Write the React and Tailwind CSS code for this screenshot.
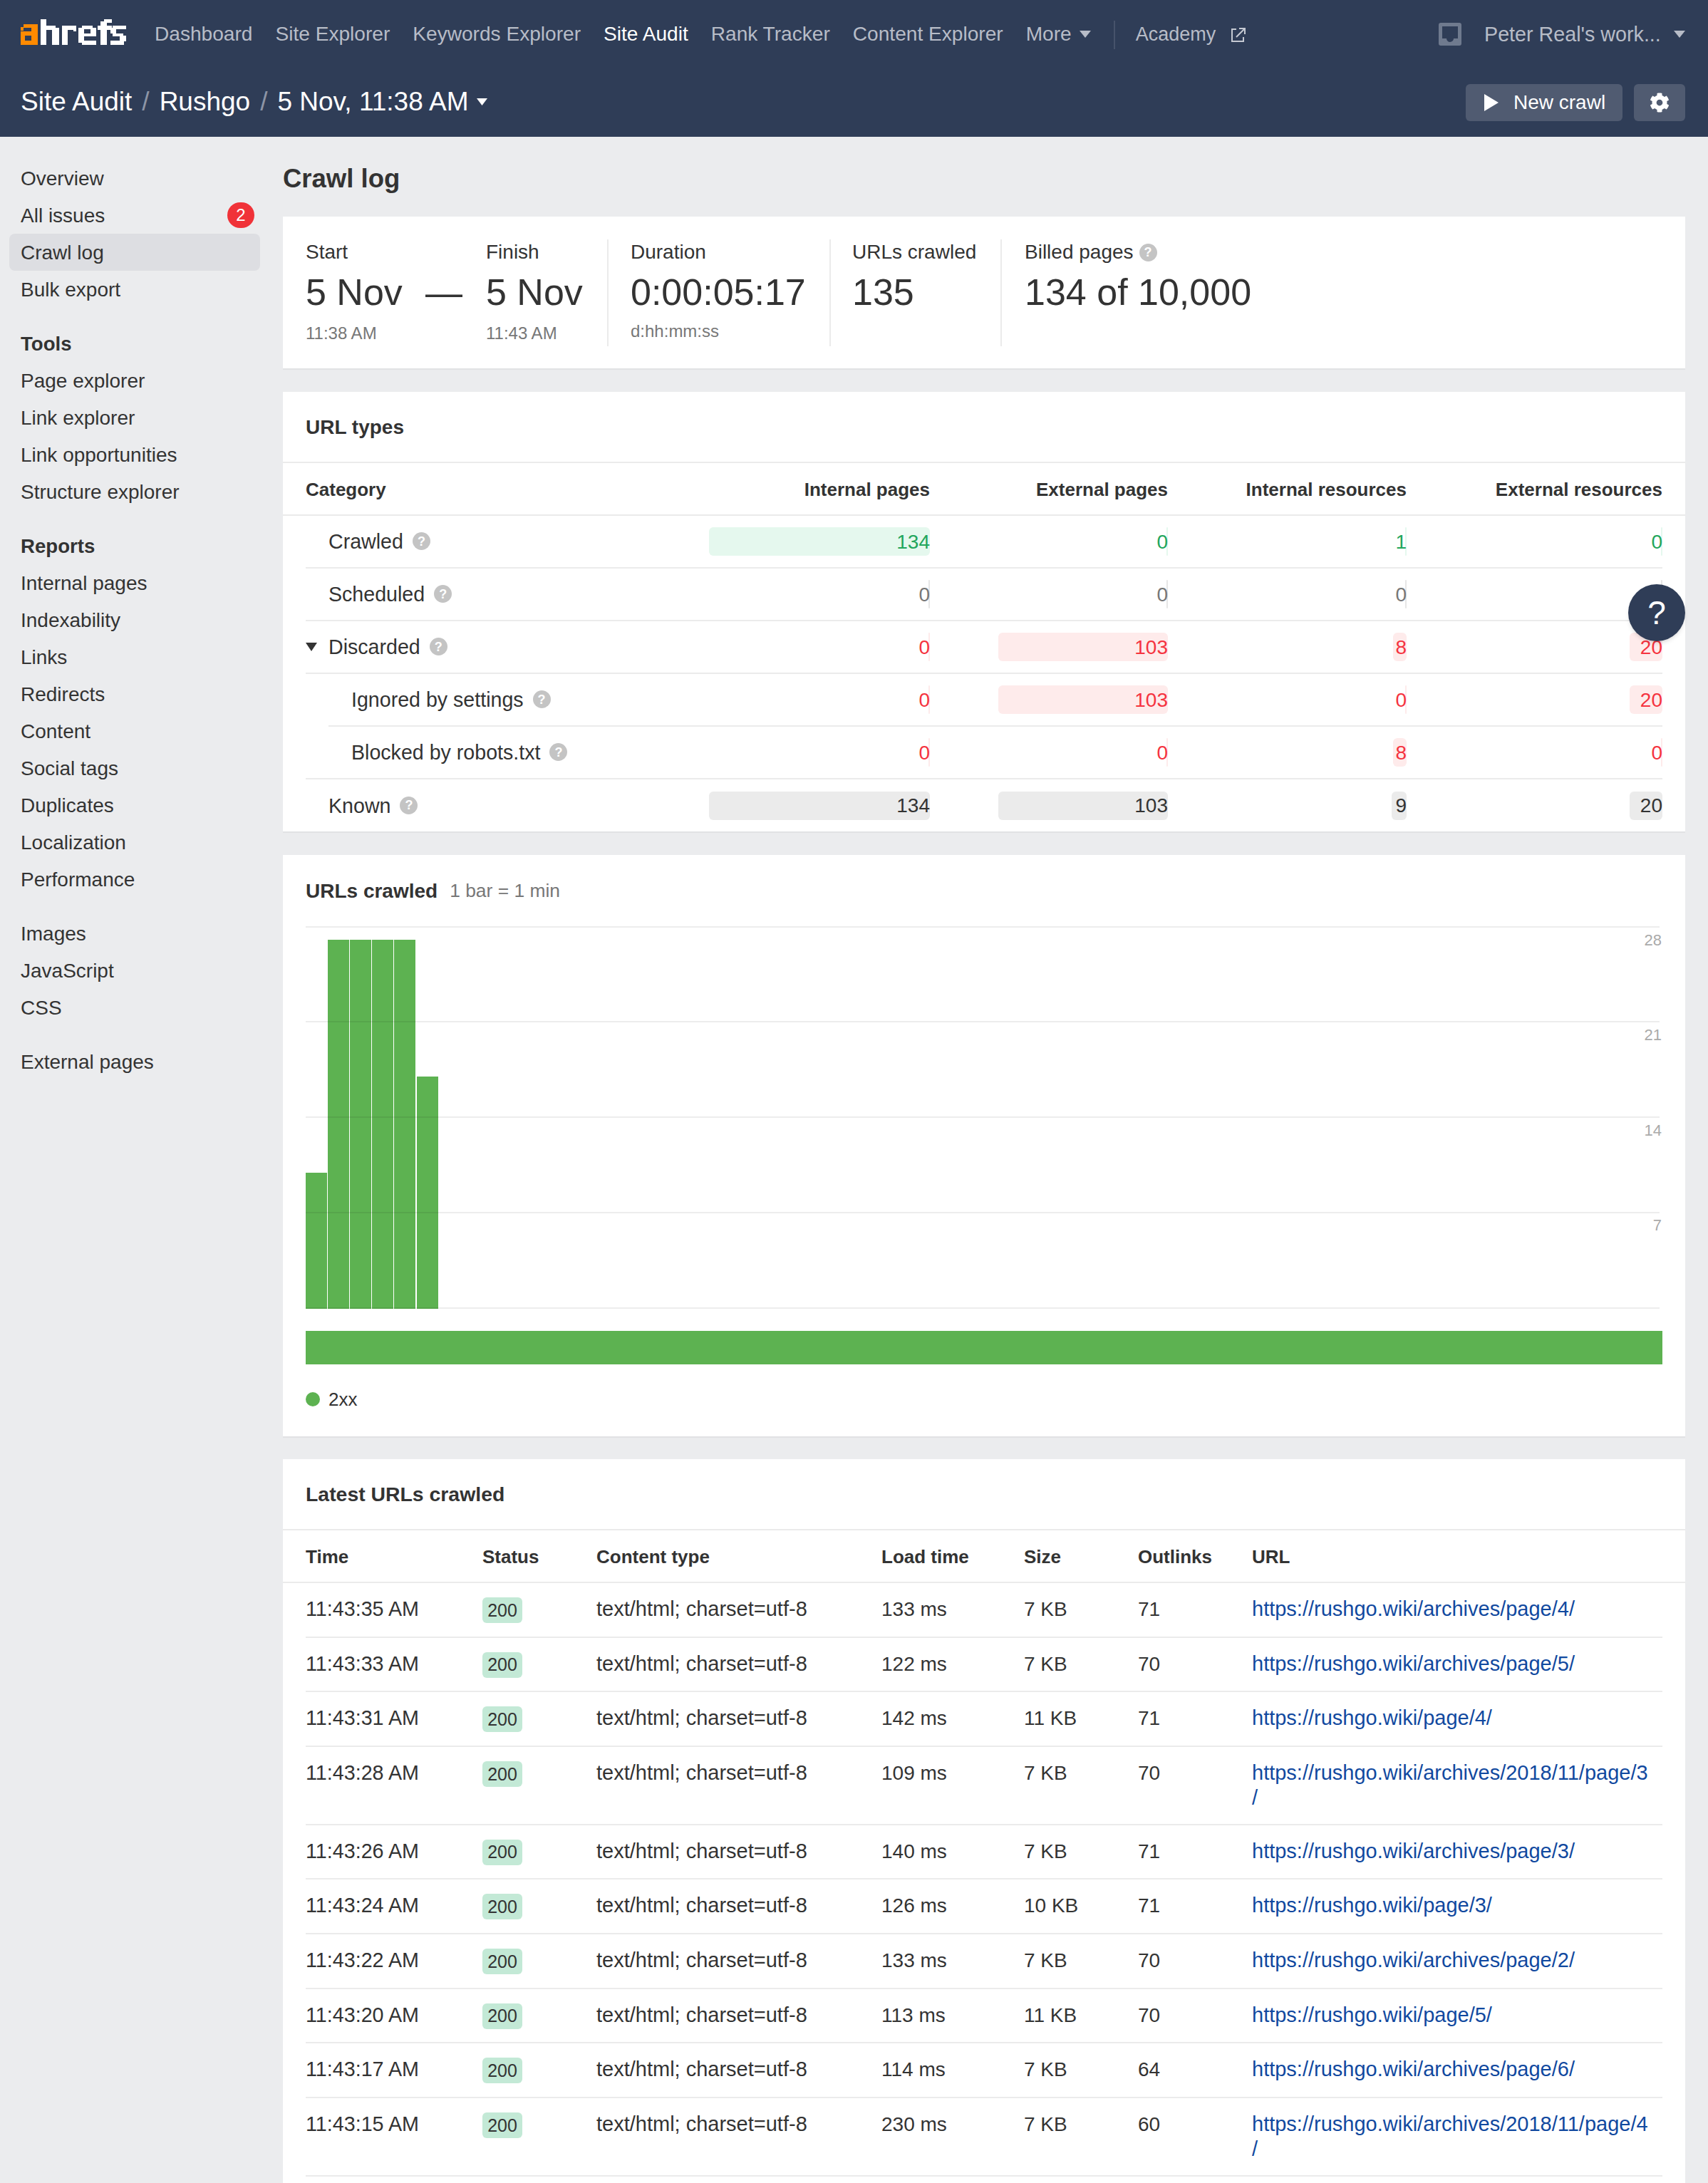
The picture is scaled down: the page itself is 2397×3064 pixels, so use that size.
import React from 'react';
import { FaCog } from 'react-icons/fa';

const Logo = () => {
  const orange = [[4,7,20,5],[0,11,4,5],[15,7,9,29],[0,17,24,6],[0,17,6,19],[0,30,24,6]];
  const white = [
    [28,0,8,36],[36,9,13,6],[44,12,10,24],
    [58,9,8,27],[66,9,12,6],[74,9,4,8],
    [86,9,15,5],[81,12,8,21],[98,12,8,12],[81,20,25,4],[86,30,20,6],
    [112,3,9,33],[117,0,11,5],[108,9,20,6],
    [129,9,19,5],[126,12,8,8],[129,20,15,4],[139,23,9,8],[126,30,19,6],
  ];
  return (
    <svg width="148" height="36" viewBox="0 0 148 36" className="shrink-0 -mt-[8px]" aria-label="ahrefs">
      {orange.map((r, i) => <rect key={i} x={r[0]} y={r[1]} width={r[2]} height={r[3]} fill="#ff8a00" />)}
      {white.map((r, i) => <rect key={i} x={r[0]} y={r[1]} width={r[2]} height={r[3]} fill="#ffffff" />)}
    </svg>
  );
};

const Caret = ({ w = 16, h = 10, color = '#b7bcc7' }) => (
  <svg width={w} height={h} viewBox="0 0 16 10" preserveAspectRatio="none" className="shrink-0"><path d="M0 0H16L8 10Z" fill={color} /></svg>
);

const Help = ({ className = '' }) => (
  <span className={`inline-flex items-center justify-center shrink-0 w-[25px] h-[25px] rounded-full bg-[#c4c4c4] text-white text-[18px] font-bold leading-none ${className}`}>?</span>
);

const navItems = ['Dashboard', 'Site Explorer', 'Keywords Explorer', 'Site Audit', 'Rank Tracker', 'Content Explorer'];

const Header = () => (
  <header className="h-[192px] bg-[#2f3d57] shrink-0 px-[29px] pr-[32px]">
    <div className="h-[96px] flex items-center text-[28.1px] text-[#b7bcc7] pt-[1px]">
      <Logo />
      <nav className="ml-[40px] flex items-center gap-[32px]">
        {navItems.map((n) => (
          <span key={n} className={n === 'Site Audit' ? 'text-white' : ''}>{n}</span>
        ))}
        <span className="flex items-center gap-[11px]">More <Caret /></span>
      </nav>
      <div className="ml-[32px] w-[2px] h-[40px] bg-[#46536b]" />
      <span className="ml-[29px] flex items-center gap-[21px] text-[27px]">
        Academy
        <svg width="22" height="22" viewBox="0 0 22 22" fill="none" stroke="#c5c9d2" strokeWidth="2">
          <path d="M8 3H2V20H18V14" />
          <path d="M8 14L20 2M12 2H20V10" />
        </svg>
      </span>
      <div className="ml-auto flex items-center">
        <svg width="32" height="32" viewBox="0 0 32 32">
          <path fillRule="evenodd" d="M3 0H29a3 3 0 0 1 3 3V29a3 3 0 0 1-3 3H3a3 3 0 0 1-3-3V3a3 3 0 0 1 3-3ZM5 5V22H11a5 5 0 0 0 10 0H27V5Z" fill="#6f7a8e" />
        </svg>
        <span className="ml-[32px] w-[266px] whitespace-nowrap text-[28.7px]">Peter Real's work...</span>
        <Caret />
      </div>
    </div>
    <div className="h-[96px] flex items-center">
      <div className="flex items-center text-[37px] text-white -mt-[2px]">
        <span>Site Audit</span>
        <span className="text-[#8d95a6] mx-[14px]">/</span>
        <span>Rushgo</span>
        <span className="text-[#8d95a6] mx-[14px]">/</span>
        <span>5 Nov, 11:38 AM</span>
        <span className="ml-[11px]"><Caret w={15} h={10} color="#ffffff" /></span>
      </div>
      <div className="ml-auto flex items-center gap-[16px]">
        <button className="h-[52px] w-[220px] rounded-md bg-[#505b71] flex items-center pl-[26px] text-white text-[28px]">
          <svg width="20" height="24" viewBox="0 0 20 24"><path d="M0 0L20 12L0 24Z" fill="#ffffff" /></svg>
          <span className="ml-[21px]">New crawl</span>
        </button>
        <button className="h-[52px] w-[72px] rounded-md bg-[#505b71] flex items-center justify-center text-white">
          <FaCog size={28} />
        </button>
      </div>
    </div>
  </header>
);

const SideItem = ({ label, active, badge }) => (
  <div className={`h-[52px] flex items-center justify-between pl-[16px] pr-[8px] rounded-lg ${active ? 'bg-[#dddee2]' : ''}`}>
    <span className="pt-[1px]">{label}</span>
    {badge && <span className="w-[38px] h-[36px] rounded-full bg-[#f03238] text-white text-[24px] flex items-center justify-center">{badge}</span>}
  </div>
);

const SideHead = ({ label }) => (
  <div className="h-[52px] mt-[24px] flex items-center pl-[16px] pt-[1px] font-bold text-[27.6px]">{label}</div>
);

const Sidebar = () => (
  <aside className="w-[397px] shrink-0 pl-[13px] pr-[32px] pt-[32px]">
    <SideItem label="Overview" />
    <SideItem label="All issues" badge="2" />
    <SideItem label="Crawl log" active />
    <SideItem label="Bulk export" />
    <SideHead label="Tools" />
    {['Page explorer', 'Link explorer', 'Link opportunities', 'Structure explorer'].map((s) => <SideItem key={s} label={s} />)}
    <SideHead label="Reports" />
    {['Internal pages', 'Indexability', 'Links', 'Redirects', 'Content', 'Social tags', 'Duplicates', 'Localization', 'Performance'].map((s) => <SideItem key={s} label={s} />)}
    <div className="mt-[24px]">
      {['Images', 'JavaScript', 'CSS'].map((s) => <SideItem key={s} label={s} />)}
    </div>
    <div className="mt-[24px]"><SideItem label="External pages" /></div>
  </aside>
);

const Stat = ({ label, big, small, help, className, smallClass = 'mt-[12px]' }) => (
  <div className={className}>
    <div className="h-[36px] flex items-center gap-[8px]">{label}{help && <Help />}</div>
    <div className="mt-[8px] h-[60px] flex items-center text-[52px] whitespace-nowrap">{big}</div>
    {small && <div className={`${smallClass} leading-[32px] text-[24px] text-[#777777]`}>{small}</div>}
  </div>
);

const StatsCard = () => (
  <section className="bg-white border-b-2 border-[#e1e2e4] h-[215px] pt-[32px] pl-[32px] flex items-start">
    <Stat label="Start" big="5 Nov" small="11:38 AM" className="w-[168px]" />
    <div className="w-[85px] mt-[44px] h-[60px] flex items-center text-[52px]">—</div>
    <Stat label="Finish" big="5 Nov" small="11:43 AM" className="w-[170px]" />
    <Stat label="Duration" big="0:00:05:17" small="d:hh:mm:ss" smallClass="mt-[9px]" className="w-[312px] h-[150px] border-l-2 border-[#ebebeb] pl-[31px]" />
    <Stat label="URLs crawled" big="135" className="w-[240px] h-[150px] border-l-2 border-[#ebebeb] pl-[30px]" />
    <Stat label="Billed pages" big="134 of 10,000" help className="h-[150px] border-l-2 border-[#ebebeb] pl-[32px]" />
  </section>
);

const tones = {
  green: 'text-[#22a65c] bg-[#e5f8ee]',
  gray: 'text-[#777777] bg-[#e6e6e6]',
  red: 'text-[#f5333f] bg-[#feebeb]',
  dark: 'text-[#333333] bg-[#ebebeb]',
};

const Bar = ({ v, w, tone }) => {
  return (
    <div className="flex justify-end items-center">
      <div style={{ width: w }} className={`h-[40px] pt-[1px] rounded-md flex justify-end items-center whitespace-nowrap ${tones[tone]}`}>{v}</div>
    </div>
  );
};

const typeRows = [
  { label: 'Crawled', tone: 'green', cells: [[134, 310], [0, 2], [1, 2], [0, 2]] },
  { label: 'Scheduled', tone: 'gray', cells: [[0, 2], [0, 2], [0, 2], [0, 2]] },
  { label: 'Discarded', tone: 'red', caret: true, cells: [[0, 2], [103, 238], [8, 19], [20, 46]] },
  { label: 'Ignored by settings', tone: 'red', nested: true, cells: [[0, 2], [103, 238], [0, 2], [20, 46]] },
  { label: 'Blocked by robots.txt', tone: 'red', nested2: true, cells: [[0, 2], [0, 2], [8, 19], [0, 2]] },
  { label: 'Known', tone: 'dark', last: true, cells: [[134, 310], [103, 238], [9, 21], [20, 46]] },
];

const TypeRow = ({ r }) => {
  const grid = r.nested
    ? 'ml-[32px] grid-cols-[534px_310px_334px_335px_359px]'
    : 'grid-cols-[566px_310px_334px_335px_359px]';
  const border = r.last ? 'h-[73px]' : 'h-[74px] border-b-2 border-[#ebebeb]';
  return (
    <div className={`grid items-center ${grid} ${border}`}>
      <div className={`flex items-center gap-[13px] text-[28.6px] ${r.nested ? 'pl-[32px]' : r.nested2 ? 'pl-[64px]' : r.caret ? '' : 'pl-[32px]'}`}>
        {r.caret && <span className="mr-[3px]"><Caret h={12} color="#333333" /></span>}
        <span className="pt-[1px]">{r.label}</span>
        <Help />
      </div>
      {r.cells.map((c, i) => <Bar key={i} v={c[0]} w={c[1]} tone={r.tone} />)}
    </div>
  );
};

const TypesCard = () => (
  <section className="bg-white mt-[31px] border-b-2 border-[#e1e2e4]">
    <div className="h-[100px] flex items-center px-[32px] pt-[2px] font-bold border-b-2 border-[#ebebeb]">URL types</div>
    <div className="h-[74px] px-[32px] pt-[2px] border-b-2 border-[#ebebeb] font-bold text-[26px] grid grid-cols-[566px_310px_334px_335px_359px] items-center">
      <div>Category</div>
      <div className="text-right whitespace-nowrap">Internal pages</div>
      <div className="text-right">External pages</div>
      <div className="text-right">Internal resources</div>
      <div className="text-right">External resources</div>
    </div>
    <div className="px-[32px]">
      {typeRows.map((r) => <TypeRow key={r.label} r={r} />)}
    </div>
  </section>
);

const Chart = () => {
  const lines = [1, 134, 268, 402, 536];
  const bars = [[0, 346], [31, 19], [62, 19], [93, 19], [124, 19], [156, 211]];
  const labels = [['28', 27], ['21', 160], ['14', 294], ['7', 427]];
  return (
    <svg width="1904" height="538" viewBox="0 0 1904 538" className="block">
      {bars.map((b, i) => <rect key={i} x={b[0]} y={b[1]} width="30" height={537 - b[1]} fill="#5db251" />)}
      {lines.map((y) => <line key={y} x1="0" x2="1900" y1={y} y2={y} stroke="#000000" strokeOpacity="0.07" strokeWidth="2" />)}
      {labels.map(([t, y]) => (
        <text key={t} x="1903" y={y} textAnchor="end" fontSize="22" fill="#aaaaaa" fontFamily="'Liberation Sans', sans-serif">{t}</text>
      ))}
    </svg>
  );
};

const ChartCard = () => (
  <section className="bg-white mt-[31px] border-b-2 border-[#e1e2e4] px-[32px] h-[818px]">
    <div className="h-[100px] pt-[2px] flex items-center gap-[17px]">
      <span className="font-bold">URLs crawled</span>
      <span className="text-[26.4px] text-[#777777]">1 bar = 1 min</span>
    </div>
    <Chart />
    <div className="mt-[30px] h-[47px] bg-[#5db251]" />
    <div className="mt-[32px] h-[34px] flex items-center gap-[12px] text-[26px]">
      <span className="w-[20px] h-[20px] rounded-full bg-[#5db251]" />
      <span>2xx</span>
    </div>
  </section>
);

const logRows = [
  ['11:43:35 AM', '133 ms', '7 KB', '71', 'https://rushgo.wiki/archives/page/4/'],
  ['11:43:33 AM', '122 ms', '7 KB', '70', 'https://rushgo.wiki/archives/page/5/'],
  ['11:43:31 AM', '142 ms', '11 KB', '71', 'https://rushgo.wiki/page/4/'],
  ['11:43:28 AM', '109 ms', '7 KB', '70', 'https://rushgo.wiki/archives/2018/11/page/3', '/'],
  ['11:43:26 AM', '140 ms', '7 KB', '71', 'https://rushgo.wiki/archives/page/3/'],
  ['11:43:24 AM', '126 ms', '10 KB', '71', 'https://rushgo.wiki/page/3/'],
  ['11:43:22 AM', '133 ms', '7 KB', '70', 'https://rushgo.wiki/archives/page/2/'],
  ['11:43:20 AM', '113 ms', '11 KB', '70', 'https://rushgo.wiki/page/5/'],
  ['11:43:17 AM', '114 ms', '7 KB', '64', 'https://rushgo.wiki/archives/page/6/'],
  ['11:43:15 AM', '230 ms', '7 KB', '60', 'https://rushgo.wiki/archives/2018/11/page/4', '/'],
];

const logCols = 'grid grid-cols-[248px_160px_400px_200px_160px_160px_576px]';

const LogCard = () => (
  <section className="bg-white mt-[30px] flex-1">
    <div className="h-[100px] pt-[1px] flex items-center px-[32px] font-bold text-[28.4px] border-b-2 border-[#ebebeb]">Latest URLs crawled</div>
    <div className={`h-[74px] px-[32px] pt-[2px] border-b-2 border-[#ebebeb] font-bold text-[26px] items-center ${logCols}`}>
      {['Time', 'Status', 'Content type', 'Load time', 'Size', 'Outlinks', 'URL'].map((h) => <div key={h}>{h}</div>)}
    </div>
    <div className="px-[32px]">
      {logRows.map((r) => (
        <div key={r[0]} className={`border-b-2 border-[#ebebeb] pt-[19px] leading-[35px] ${logCols} ${r[5] ? 'h-[109.6px]' : 'h-[76.7px]'}`}>
          <div className="text-[28.7px]">{r[0]}</div>
          <div className="pt-[1px]">
            <span className="w-[56px] h-[36px] rounded-md bg-[#c3e9d6] text-[25px] flex items-center justify-center">200</span>
          </div>
          <div className="text-[29px]">text/html; charset=utf-8</div>
          <div>{r[1]}</div>
          <div>{r[2]}</div>
          <div>{r[3]}</div>
          <div className="text-[#11499f] text-[29px]">{r[4]}{r[5] && <br />}{r[5]}</div>
        </div>
      ))}
    </div>
  </section>
);

export default function App() {
  return (
    <div className="relative h-[3064px] overflow-hidden bg-[#ebecee] text-[#333333] text-[28px] flex flex-col font-['Liberation_Sans',Arial,sans-serif]">
      <Header />
      <div className="flex flex-1 min-h-0">
        <Sidebar />
        <main className="w-[1968px] shrink-0 flex flex-col">
          <div className="h-[112px] pt-[6px] flex items-center text-[36.5px] font-bold">Crawl log</div>
          <StatsCard />
          <TypesCard />
          <ChartCard />
          <LogCard />
        </main>
      </div>
      <button className="absolute left-[2285px] top-[820px] w-[80px] h-[80px] rounded-full bg-[#2f3d57] text-white text-[46px] flex items-center justify-center shadow-md">?</button>
    </div>
  );
}
